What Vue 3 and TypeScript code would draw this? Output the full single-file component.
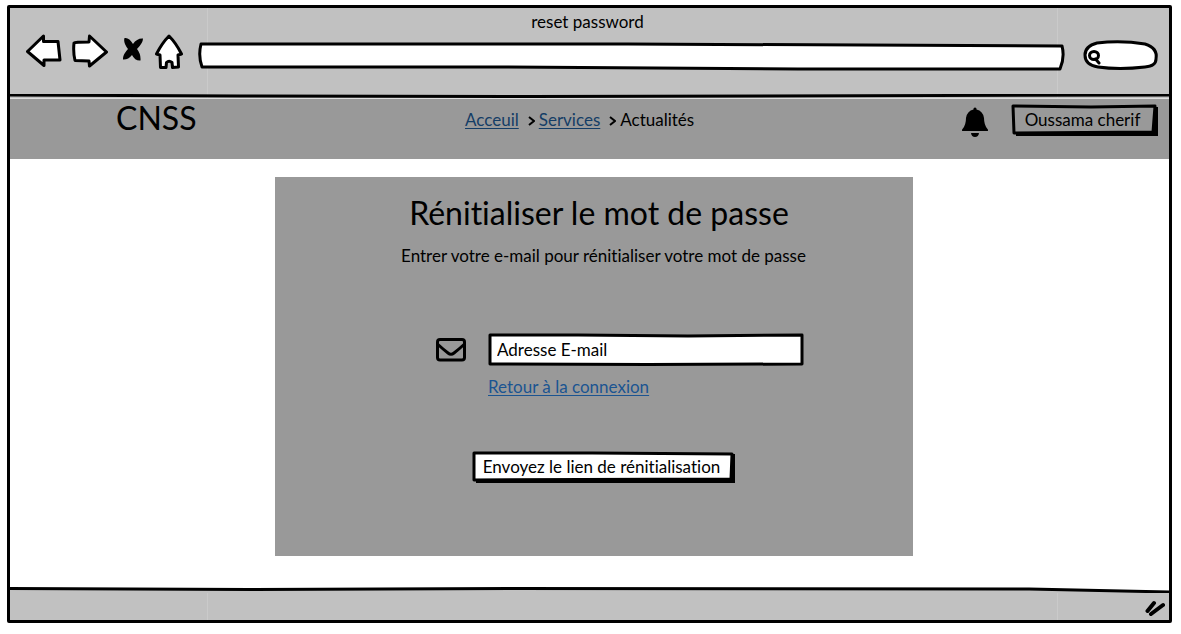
<script setup lang="ts">
import { ref } from 'vue'

const address = ref('')
const query = ref('')
const email = ref('')
</script>

<template>
  <div class="window">
    <header class="chrome">
      <div class="title">reset password</div>
      <div class="toolbar">
        <button class="tool" type="button" aria-label="Back">
          <svg width="36" height="34" viewBox="0 0 36 34">
            <path d="M1.500 17.500 L17.500 2 L17.500 7.500 L32 7.500 L34 26 L18 26 L18 31.500 Z" class="outline" />
          </svg>
        </button>
        <button class="tool forward" type="button" aria-label="Forward">
          <svg width="36" height="34" viewBox="0 0 36 34">
            <path d="M2 9 Q3 8 17 8 L17.500 2 L34.500 18 L17.500 32 L17 27 L3 26.500 Q1 18 2 9 Z" class="outline" />
          </svg>
        </button>
        <button class="tool stop" type="button" aria-label="Stop">
          <svg width="20" height="24" viewBox="0 0 20 24">
            <path d="M1.500 1 Q6 0 10 7 Q14 1 20 1.500 Q20 6 14 12 Q18 17 17.500 23.500 Q12 24 9 18 Q5 23 0 22.500 Q-0.500 18 5 12 Q0 6 1.500 1 Z" />
          </svg>
        </button>
        <button class="tool home" type="button" aria-label="Home">
          <svg width="28" height="36" viewBox="0 0 28 36">
            <path d="M14 2 Q21 9 26.500 20 L23 21 L23.500 33 L17.500 33.500 L17 28.500 Q14 26 11.500 28.500 L11 33.500 L5.500 33.500 L5 21 L1.500 20 Q7 9 14 2 Z" class="outline" />
          </svg>
        </button>
        <label class="address">
          <svg class="frame" viewBox="0 0 866 28" preserveAspectRatio="none" aria-hidden="true">
            <path d="M3 2 L430 2 L864 4 Q867 15 862 27 L600 27 L300 25 L4 25 Q0 14 3 2 Z" class="white" />
          </svg>
          <input v-model="address" type="text" aria-label="Address" />
        </label>
        <label class="search">
          <svg class="frame" viewBox="0 0 75 30" preserveAspectRatio="none" aria-hidden="true">
            <path d="M14 3 Q38 0 62 4 Q75 8 73 19 Q73 26 62 27 Q36 30 15 27 Q2 25 2 15 Q2 6 14 3 Z" class="white" />
          </svg>
          <svg class="lens" width="13" height="15" viewBox="0 0 13 15" aria-hidden="true">
            <ellipse cx="6" cy="5.500" rx="4.500" ry="4" />
            <path d="M7.500 9 L11 13" />
          </svg>
          <input v-model="query" type="text" aria-label="Search" />
        </label>
      </div>
      <svg class="rule" viewBox="0 0 1160 4" preserveAspectRatio="none" aria-hidden="true">
        <path d="M0 1 L230 2 L520 2.500 L1160 1" />
      </svg>
    </header>

    <nav class="navbar">
      <div class="brand">CNSS</div>
      <div class="crumbs">
        <a href="#accueil">Acceuil</a>
        <svg class="sep" width="7" height="10" viewBox="0 0 7 10" aria-hidden="true"><path d="M1 1 L6 5 L1 9" /></svg>
        <a href="#services">Services</a>
        <svg class="sep" width="7" height="10" viewBox="0 0 7 10" aria-hidden="true"><path d="M1 1 L6 5 L1 9" /></svg>
        <span>Actualités</span>
      </div>
      <button class="bell" type="button" aria-label="Notifications">
        <svg width="26" height="30" viewBox="0 0 26 30">
          <path d="M11.500 2.500 V1.500 Q13 -0.500 14.500 1.500 V2.500 Q21 4 22 11 Q22 18 25.500 22 Q27 24 25 24 H1 Q-1 24 0.500 22 Q4 18 4 11 Q5 4 11.500 2.500 Z M9 26 H17 Q16.500 30 13 30 Q9.500 30 9 26 Z" />
        </svg>
      </button>
      <button class="sketch user" type="button">
        <svg class="frame" viewBox="0 0 148 32" preserveAspectRatio="none" aria-hidden="true">
          <path d="M143 3 H147 V32 H5 V28 H143 Z" class="shade" />
          <path d="M2 2 L80 3 L144 2 L142 28 L3 29 Z" class="grey" />
        </svg>
        <span>Oussama cherif</span>
      </button>
    </nav>

    <main class="page">
      <form class="panel" @submit.prevent>
        <h1>Rénitialiser le mot de passe</h1>
        <p>Entrer votre e-mail pour rénitialiser votre mot de passe</p>
        <div class="fields">
          <svg class="mail" width="30" height="24" viewBox="0 0 30 24" aria-hidden="true">
            <rect x="1.500" y="1.500" width="27" height="20.500" rx="2.500" />
            <path d="M2 6.500 Q8 12 12 15 Q15 17.500 18 15 Q22 12 28 6.500" />
          </svg>
          <label class="email">
            <svg class="frame" viewBox="0 0 316 33" preserveAspectRatio="none" aria-hidden="true">
              <path d="M2 2 L90 2 L200 3 L314 2 L314 31 L160 31.500 L2 31 Z" class="white" />
            </svg>
            <input v-model="email" type="email" placeholder="Adresse E-mail" aria-label="Adresse E-mail" />
          </label>
          <a class="back" href="#connexion">Retour à la connexion</a>
        </div>
        <button class="sketch send" type="submit">
          <svg class="frame" viewBox="0 0 264 32" preserveAspectRatio="none" aria-hidden="true">
            <path d="M258 3 H263 V32 H4 V27 H258 Z" class="shade" />
            <path d="M2 2 L120 2 L260 3 L259 28 L2 29 Z" class="white" />
          </svg>
          <span>Envoyez le lien de rénitialisation</span>
        </button>
      </form>
    </main>

    <footer class="status">
      <svg class="edge" viewBox="0 0 1160 6" preserveAspectRatio="none" aria-hidden="true">
        <path d="M0 6 V2 L240 2.500 L500 1.500 L1020 2 L1160 5 V6 Z" class="fill" />
        <path d="M0 1.500 L240 2.500 L500 1.500 L1020 2 L1160 5" />
      </svg>
      <svg class="grip" width="20" height="17" viewBox="0 0 20 17" aria-hidden="true">
        <path d="M2.500 11 L9 3" />
        <path d="M6 14 L18 5" />
      </svg>
    </footer>
  </div>
</template>

<style>
body {
  margin: 0;
  background: #fff;
}
</style>

<style scoped>
.window {
  box-sizing: border-box;
  display: flex;
  flex-direction: column;
  min-height: calc(100vh - 16px);
  margin: 5px 9px 11px 7px;
  border: 3px solid #000;
  border-radius: 2px;
  background: #fff;
  color: #000;
  font-family: Lato, "Liberation Sans", sans-serif;
  font-size: 17px;
  font-variant-ligatures: none;
  line-height: 20px;
}

button,
input {
  margin: 0;
  padding: 0;
  border: 0;
  background: none;
  color: inherit;
  font: inherit;
  font-variant-ligatures: none;
}

button {
  cursor: pointer;
}

input:focus {
  outline: none;
}

svg {
  display: block;
}

.chrome,
.status {
  background:
    linear-gradient(#cacaca, #cacaca) 17% 0 / 1px 100% no-repeat,
    linear-gradient(#cacaca, #cacaca) 90.4% 0 / 1px 100% no-repeat,
    #c1c1c1;
}

.title {
  padding-top: 4px;
  padding-right: 4px;
  text-align: center;
}

.toolbar {
  display: flex;
  align-items: flex-start;
  height: 52px;
  padding: 2px 11px 0 16px;
}

.forward {
  margin-left: 10px;
}

.stop {
  margin-top: 3px;
  margin-left: 15px;
}

.home {
  margin-left: 12px;
}

.outline {
  fill: #fff;
  stroke: #000;
  stroke-width: 3;
  stroke-linejoin: round;
}

.address,
.search,
.email,
.sketch {
  position: relative;
  display: block;
}

.frame {
  position: absolute;
  inset: 0;
  width: 100%;
  height: 100%;
  overflow: visible;
}

.frame path {
  vector-effect: non-scaling-stroke;
}

.white,
.grey {
  fill: #fff;
  stroke: #000;
  stroke-width: 3;
  stroke-linejoin: round;
}

.grey {
  fill: #999;
}

.address {
  flex: 1;
  height: 28px;
  margin-top: 8px;
  margin-left: 15px;
}

.search {
  width: 75px;
  height: 30px;
  margin-top: 6px;
  margin-left: 19px;
}

.address input,
.search input,
.email input {
  position: relative;
  box-sizing: border-box;
  width: 100%;
  height: 100%;
  padding: 0 9px;
}

.search input {
  padding-left: 20px;
}

.lens {
  position: absolute;
  top: 10px;
  left: 5px;
  fill: none;
  stroke: #000;
  stroke-width: 3;
  stroke-linecap: round;
}

.rule {
  width: 100%;
  height: 4px;
  margin-top: 8px;
}

.rule path,
.edge path {
  fill: none;
  stroke: #000;
  stroke-width: 3;
  vector-effect: non-scaling-stroke;
}

.navbar {
  display: flex;
  align-items: flex-start;
  box-sizing: border-box;
  height: 61px;
  padding: 5px 10px 0 0;
  border-top: 1px solid #ddd;
  background: #999;
}

.brand {
  box-sizing: border-box;
  width: 39.6%;
  padding-left: 106px;
  font-size: 32px;
  line-height: 28px;
}

.crumbs {
  display: flex;
  flex: 1;
  align-items: center;
  padding-top: 6px;
}

.sep {
  margin: 2px 4px 0 9px;
  fill: none;
  stroke: #000;
  stroke-width: 2;
}

a {
  color: #143d66;
  text-decoration: underline;
  text-underline-offset: 2px;
}

.bell {
  margin: 3px 23px 0 0;
}

.sketch {
  height: 32px;
  white-space: nowrap;
}

.sketch span {
  position: relative;
}

.user {
  width: 148px;
  padding-right: 5px;
}

.page {
  flex: 1;
  padding: 18px 0 32px 9px;
}

.panel {
  display: flex;
  flex-direction: column;
  align-items: center;
  box-sizing: border-box;
  width: 55.1%;
  min-width: 638px;
  min-height: 379px;
  margin: 0 auto;
  padding: 19px 0 72px;
  background: #999;
}

h1 {
  margin: 0 0 0 10px;
  font-size: 32px;
  font-weight: 400;
  line-height: 34px;
}

p {
  margin: 16px 0 0 19px;
}

.fields {
  display: grid;
  grid-template-columns: 30px 316px;
  column-gap: 22px;
  row-gap: 11px;
  align-items: center;
  margin: 67px 0 0 52px;
}

.mail {
  fill: none;
  stroke: #000;
  stroke-width: 3;
}

.email {
  height: 33px;
}

.email input::placeholder {
  color: #000;
  opacity: 1;
}

.back {
  grid-column: 2;
  justify-self: start;
  color: #1b5491;
}

.send {
  width: 264px;
  margin: 54px 0 0 20px;
  padding-right: 5px;
}

.status {
  display: flex;
  justify-content: flex-end;
  position: relative;
  height: 31px;
}

.edge {
  position: absolute;
  top: -2px;
  left: 0;
  width: 100%;
  height: 6px;
  background: #fff;
}

.edge .fill {
  fill: #c1c1c1;
  stroke: none;
}

.grip {
  margin: 11px 4px 0 0;
  fill: none;
  stroke: #000;
  stroke-width: 4;
  stroke-linecap: round;
}
</style>
